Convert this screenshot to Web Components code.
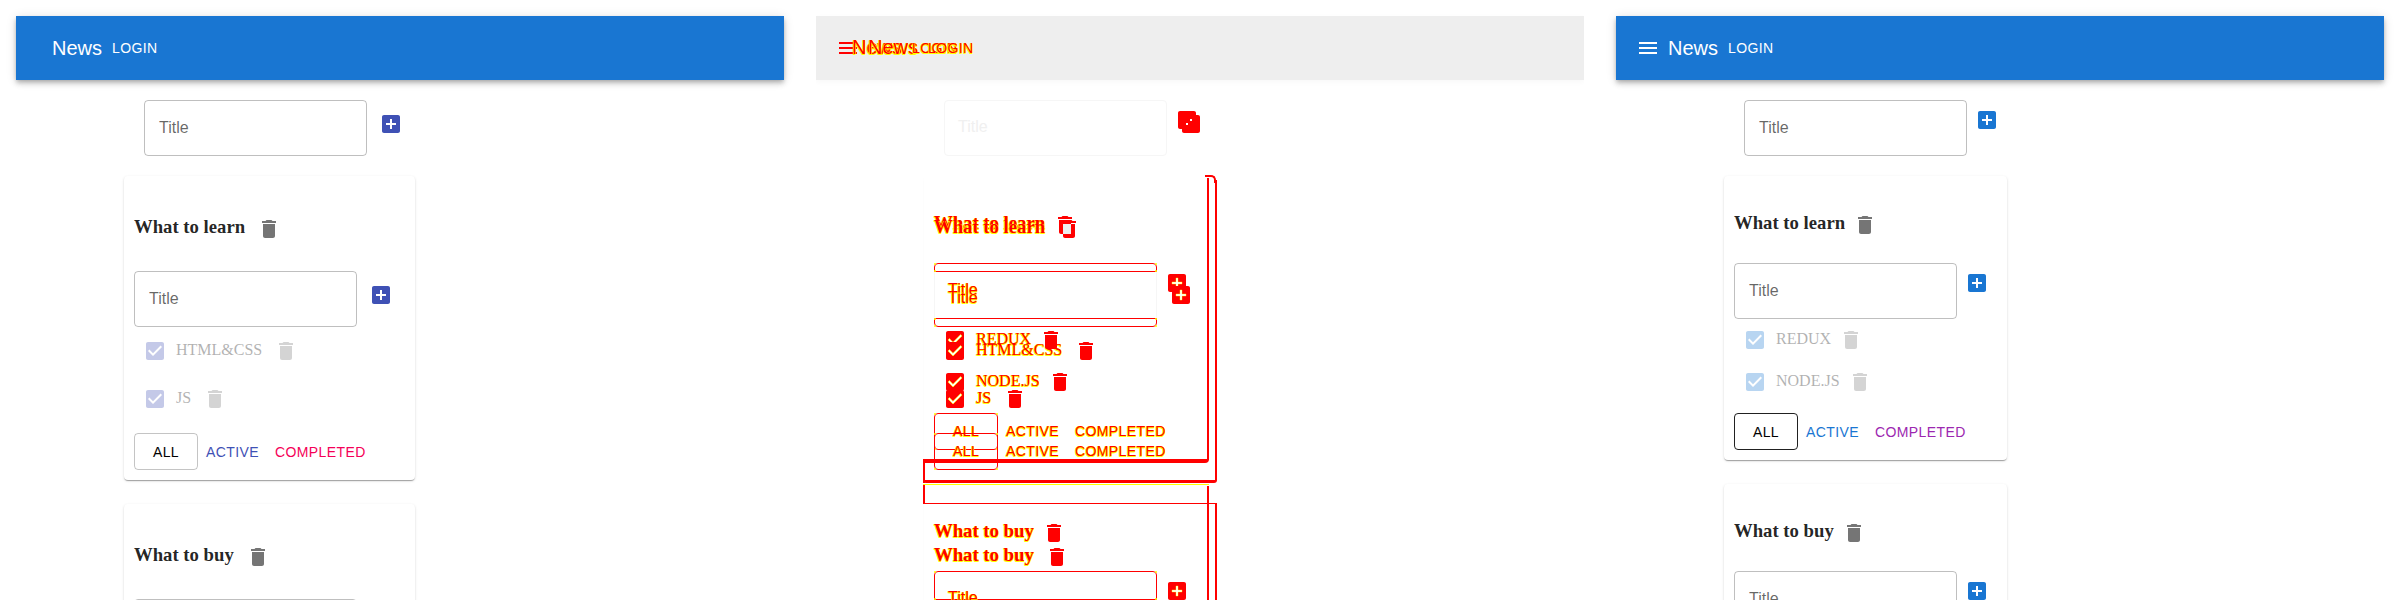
<!DOCTYPE html>
<html lang="en">
<head>
<meta charset="utf-8">
<title>Todo visual diff</title>
<style>
    html, body { margin: 0; background: #fff; }
    body {
        display: flex;
        gap: 32px;
        padding: 0 16px;
        width: 2368px;
        height: 600px;
        overflow: hidden;
        font-family: "Liberation Sans", Arial, sans-serif;
    }
</style>
</head>
<body>
<todo-panel variant="baseline">
    <app-bar></app-bar>
    <add-form></add-form>
    <todo-card heading="What to learn">
        <add-form></add-form>
        <task-list>
            <task-row>HTML&amp;CSS</task-row>
            <task-row>JS</task-row>
        </task-list>
        <filter-row></filter-row>
    </todo-card>
    <todo-card heading="What to buy">
        <add-form></add-form>
    </todo-card>
</todo-panel>

<diff-panel></diff-panel>

<todo-panel variant="actual">
    <app-bar menu></app-bar>
    <add-form></add-form>
    <todo-card heading="What to learn">
        <add-form></add-form>
        <task-list>
            <task-row>REDUX</task-row>
            <task-row>NODE.JS</task-row>
        </task-list>
        <filter-row></filter-row>
    </todo-card>
    <todo-card heading="What to buy">
        <add-form></add-form>
    </todo-card>
</todo-panel>

<script>
// material icons, all on a 24px grid
const ICONS = {
    add: "M19 3H5c-1.11 0-2 .9-2 2v14c0 1.1.89 2 2 2h14c1.1 0 2-.9 2-2V5c0-1.1-.9-2-2-2zm-2 10h-4v4h-2v-4H7v-2h4V7h2v4h4v2z",
    box: "M19 3H5c-1.11 0-2 .9-2 2v14c0 1.1.89 2 2 2h14c1.1 0 2-.9 2-2V5c0-1.1-.9-2-2-2z",
    plus: "M17 13h-4v4h-2v-4H7v-2h4V7h2v4h4v2z",
    check: "M10 17l-5-5 1.41-1.41L10 14.17l7.59-7.59L19 8l-9 9z",
    checked: "M19 3H5c-1.11 0-2 .9-2 2v14c0 1.1.89 2 2 2h14c1.1 0 2-.9 2-2V5c0-1.1-.9-2-2-2zm-9 14l-5-5 1.41-1.41L10 14.17l7.59-7.59L19 8l-9 9z",
    trash: "M6 19c0 1.1.9 2 2 2h8c1.1 0 2-.9 2-2V7H6v12zM19 4h-3.5l-1-1h-5l-1 1H5v2h14V4z",
    menu: "M3 18h18v-2H3v2zm0-5h18v-2H3v2zm0-7v2h18V6H3z"
};

const svgIcon = (name, color) =>
    `<svg width="24" height="24" viewBox="0 0 24 24" fill="${color}" style="display:block;flex:none"><path d="${ICONS[name]}"/></svg>`;

class TodoPanel extends HTMLElement {
    constructor() {
        super();
        this.attachShadow({mode: "open"}).innerHTML = `
            <style>
                :host {
                    display: block;
                    width: 768px;
                    flex: none;
                    padding-top: 16px;
                    color: #000;
                }
                :host([variant="baseline"]) {
                    --primary: #3f51b5;
                    --secondary: #f50057;
                    --all-border: rgba(0,0,0,.23);
                    --gap: 12px;
                    --add-top: 12px;
                    --card-width: 291px;
                    --head-top: 41px;
                    --head-bottom: 30px;
                    --list-top: 12px;
                    --row-gap: 24px;
                    --filter-top: 22px;
                }
                :host([variant="actual"]) {
                    --primary: #1976d2;
                    --secondary: #9c27b0;
                    --all-border: rgba(0,0,0,.87);
                    --gap: 8px;
                    --add-top: 8px;
                    --card-width: 283px;
                    --head-top: 37px;
                    --head-bottom: 26px;
                    --list-top: 9px;
                    --row-gap: 18px;
                    --filter-top: 19px;
                }
                ::slotted(add-form) { margin: 20px 0 20px 128px; }
                ::slotted(todo-card) { margin: 0 0 24px 108px; }
            </style>
            <slot></slot>
        `;
    }
}

class AppBar extends HTMLElement {
    constructor() {
        super();
        this.attachShadow({mode: "open"});
    }
    connectedCallback() {
        const hasMenu = this.hasAttribute("menu");
        this.shadowRoot.innerHTML = `
            <style>
                :host {
                    display: flex;
                    align-items: center;
                    height: 64px;
                    padding-left: ${hasMenu ? 20 : 36}px;
                    background: #1976d2;
                    color: #fff;
                    box-shadow: 0 2px 4px -1px rgba(0,0,0,.2), 0 4px 5px 0 rgba(0,0,0,.14), 0 1px 10px 0 rgba(0,0,0,.12);
                }
                .title { font-size: 20px; line-height: 32px; margin-left: ${hasMenu ? 8 : 0}px; }
                .login { font-size: 14px; letter-spacing: .4px; margin-left: 10px; }
            </style>
            ${hasMenu ? svgIcon("menu", "#fff") : ""}
            <span class="title">News</span>
            <span class="login">LOGIN</span>
        `;
    }
}

class AddForm extends HTMLElement {
    constructor() {
        super();
        this.attachShadow({mode: "open"}).innerHTML = `
            <style>
                :host { display: flex; align-items: flex-start; gap: var(--gap); }
                .field {
                    box-sizing: border-box;
                    display: flex;
                    align-items: center;
                    width: 223px;
                    height: 56px;
                    padding-left: 14px;
                    border: 1px solid rgba(0,0,0,.25);
                    border-radius: 4px;
                    font-size: 16px;
                    color: rgba(0,0,0,.6);
                }
                .add { margin-top: var(--add-top); }
            </style>
            <div class="field">Title</div>
            <div class="add">${svgIcon("add", "var(--primary)")}</div>
        `;
    }
}

class TodoCard extends HTMLElement {
    constructor() {
        super();
        this.attachShadow({mode: "open"});
    }
    connectedCallback() {
        this.shadowRoot.innerHTML = `
            <style>
                :host {
                    display: block;
                    box-sizing: border-box;
                    width: var(--card-width);
                    padding: var(--head-top) 10px 10px;
                    border-radius: 4px;
                    background: #fff;
                    box-shadow: 0 2px 1px -1px rgba(0,0,0,.2), 0 1px 1px 0 rgba(0,0,0,.14), 0 1px 3px 0 rgba(0,0,0,.12);
                }
                .head {
                    display: flex;
                    align-items: flex-start;
                    gap: var(--gap);
                    height: 24px;
                    margin-bottom: var(--head-bottom);
                }
                h3 {
                    margin: 0;
                    font: bold 18.72px/20px "Liberation Serif", "Times New Roman", serif;
                    color: rgba(0,0,0,.87);
                }
                ::slotted(add-form) { margin-bottom: var(--list-top); }
            </style>
            <div class="head">
                <h3>${this.getAttribute("heading")}</h3>
                ${svgIcon("trash", "rgba(0,0,0,.54)")}
            </div>
            <slot></slot>
        `;
    }
}

class TaskList extends HTMLElement {
    constructor() {
        super();
        this.attachShadow({mode: "open"}).innerHTML = `
            <style>
                :host {
                    display: flex;
                    flex-direction: column;
                    gap: var(--row-gap);
                    padding-left: 9px;
                }
            </style>
            <slot></slot>
        `;
    }
}

class TaskRow extends HTMLElement {
    constructor() {
        super();
        this.attachShadow({mode: "open"}).innerHTML = `
            <style>
                :host {
                    display: flex;
                    align-items: flex-start;
                    height: 24px;
                    opacity: .3;
                    gap: var(--gap);
                }
                .text {
                    margin-left: calc(9px - var(--gap));
                    font: 16px/22px "Liberation Serif", "Times New Roman", serif;
                    color: #000;
                }
            </style>
            ${svgIcon("checked", "var(--primary)")}
            <span class="text"><slot></slot></span>
            ${svgIcon("trash", "rgba(0,0,0,.54)")}
        `;
    }
}

class FilterRow extends HTMLElement {
    constructor() {
        super();
        this.attachShadow({mode: "open"}).innerHTML = `
            <style>
                :host {
                    display: flex;
                    margin-top: var(--filter-top);
                    font-size: 14px;
                    letter-spacing: .4px;
                }
                span {
                    box-sizing: border-box;
                    display: flex;
                    align-items: center;
                    height: 37px;
                    padding: 0 8px;
                }
                .all {
                    justify-content: center;
                    width: 64px;
                    padding: 0;
                    border: 1px solid var(--all-border);
                    border-radius: 4px;
                    color: #000;
                }
                .active { color: var(--primary); }
                .completed { color: var(--secondary); }
            </style>
            <span class="all">ALL</span>
            <span class="active">ACTIVE</span>
            <span class="completed">COMPLETED</span>
        `;
    }
}

// middle picture: changed pixels red, antialiased ones yellow, the rest washed out.
// every mark sits at the place it has in the two outer panels, so this one is a free canvas
class DiffPanel extends HTMLElement {
    constructor() {
        super();
        this.attachShadow({mode: "open"});
    }
    connectedCallback() {
        const marks = [];
        const box = (x, y, w, h, css) =>
            marks.push(`<div class="mark" style="left:${x}px;top:${y}px;width:${w}px;height:${h}px;${css}"></div>`);
        const text = (x, baseline, label, cls, ascent) =>
            marks.push(`<span class="mark txt ${cls}" style="left:${x}px;top:${baseline - ascent}px">${label}</span>`);
        const icon = (x, y, name) =>
            marks.push(`<div class="mark" style="left:${x}px;top:${y}px">${svgIcon(name, "#f00")}</div>`);
        const addIcon = (x, y) => {
            icon(x, y, "box");
            marks.push(`<svg class="mark" style="left:${x}px;top:${y}px" width="24" height="24" viewBox="0 0 24 24"><path d="${ICONS.plus}" fill="#fff" stroke="#ff0" stroke-width=".4"/></svg>`);
        };
        const checkIcon = (x, y) => {
            icon(x, y, "box");
            marks.push(`<svg class="mark" style="left:${x}px;top:${y}px" width="24" height="24" viewBox="0 0 24 24"><path d="${ICONS.check}" fill="#fff" stroke="#ff0" stroke-width=".6"/></svg>`);
        };
        // a rounded frame with the yellow pixels that the antialiased corners leave
        const frame = (x, y, w, h, radius) => {
            box(x, y, w, h, `box-sizing:border-box;border:1px solid #f00;border-radius:${radius};`);
            for (const [cx, cy] of [[x, y], [x + w - 2, y], [x, y + h - 2], [x + w - 2, y + h - 2]]) {
                box(cx, cy, 2, 2, "background:#ff0;border-radius:1px;");
            }
        };
        const red = "background:#f00;";

        // washed out parts
        box(128, 100, 223, 56, "border:1px solid #f6f6f6;border-radius:4px;box-sizing:border-box;");
        text(142, 133, "Title", "faint", 15);
        box(108, 176, 283, 284, "border-radius:4px;box-shadow:0 1px 3px rgba(0,0,0,.025);");
        box(108, 484, 283, 140, "border-radius:4px;box-shadow:0 1px 3px rgba(0,0,0,.025);");

        // bar
        icon(20, 36, "menu");
        for (const x of [36, 52]) text(x, 54, "News", "sans big", 18);
        for (const x of [96, 112]) text(x, 53, "LOGIN", "sans button", 13);

        // top form
        icon(359, 108, "box");
        icon(363, 112, "box");
        box(370, 123, 2, 2, "background:#fff;");
        box(374, 119, 2, 2, "background:#fff;");

        // card outlines
        box(389, 175, 11, 8, "border-top:2px solid #f00;border-right:2px solid #f00;border-radius:0 5px 0 0;box-sizing:border-box;");
        box(391, 178, 2, 282, red);
        box(399, 180, 2, 300, red);
        box(107, 459, 286, 4, red + "border-radius:0 0 4px 0;");
        box(107, 459, 2, 24, red);
        box(107, 480, 294, 3, red + "border-radius:0 0 4px 4px;");
        box(107, 484, 286, 1, "background:#ff0;");
        box(107, 485, 2, 19, red);
        box(108, 503, 293, 1, red);
        box(391, 486, 2, 114, red);
        box(399, 504, 2, 96, red);

        // card one heading
        for (const y of [229, 233]) text(118, y, "What to learn", "serif head", 17);
        icon(237, 213, "trash");
        icon(241, 217, "trash");
        box(247, 224, 8, 10, "background:#eee;");

        // card one field: the two frames share their sides
        frame(118, 263, 223, 9, "4px 4px 0 0");
        box(118, 272, 223, 46, "border:solid #f6f6f6;border-width:0 1px;box-sizing:border-box;");
        frame(118, 318, 223, 9, "0 0 4px 4px");
        text(132, 296, "Title", "sans", 15);
        text(132, 304, "Title", "sans", 15);
        addIcon(349, 271);
        addIcon(353, 283);

        // card one rows
        checkIcon(127, 328);
        checkIcon(127, 339);
        checkIcon(127, 370);
        checkIcon(127, 387);
        text(160, 344, "REDUX", "serif", 14);
        text(160, 355, "HTML&amp;CSS", "serif", 14);
        text(160, 386, "NODE.JS", "serif", 14);
        text(160, 403, "JS", "serif", 14);
        icon(223, 328, "trash");
        icon(258, 339, "trash");
        icon(232, 370, "trash");
        icon(187, 387, "trash");

        // filters of both panels, 20px apart
        for (const [y, b] of [[413, 436], [433, 456]]) {
            frame(118, y, 64, 37, "4px");
            for (const [x, label] of [[137, "ALL"], [190, "ACTIVE"], [259, "COMPLETED"]]) {
                text(x, b, label, "sans button", 13);
            }
        }

        // card two
        text(118, 537, "What to buy", "serif head", 17);
        text(118, 561, "What to buy", "serif head", 17);
        icon(226, 521, "trash");
        icon(229, 545, "trash");
        frame(118, 571, 223, 29, "4px 4px 0 0");
        text(132, 604, "Title", "sans", 15);
        addIcon(349, 579);

        this.shadowRoot.innerHTML = `
            <style>
                :host {
                    display: block;
                    position: relative;
                    flex: none;
                    width: 768px;
                    height: 600px;
                    overflow: hidden;
                }
                .bar {
                    position: absolute;
                    left: 0;
                    top: 16px;
                    width: 768px;
                    height: 64px;
                    background: #eee;
                    box-shadow: 0 2px 6px rgba(0,0,0,.03);
                }
                .mark { position: absolute; display: block; }
                .txt {
                    white-space: nowrap;
                    line-height: normal;
                    color: #f00;
                    text-shadow: .5px .5px 0 #ff0, -.5px -.5px 0 #ff0, .5px -.5px 0 #ff0, -.5px .5px 0 #ff0;
                }
                .sans { font-family: "Liberation Sans", Arial, sans-serif; font-size: 16px; }
                .big { font-size: 20px; }
                .button { font-size: 14px; letter-spacing: .4px; }
                .serif { font-family: "Liberation Serif", "Times New Roman", serif; font-size: 16px; }
                .head { font-size: 18.72px; font-weight: bold; }
                .txt.faint {
                    font-family: "Liberation Sans", Arial, sans-serif;
                    font-size: 16px;
                    color: #f0f0f0;
                    text-shadow: none;
                }
            </style>
            <div class="bar"></div>
            ${marks.join("\n")}
        `;
    }
}

customElements.define("todo-panel", TodoPanel);
customElements.define("app-bar", AppBar);
customElements.define("add-form", AddForm);
customElements.define("todo-card", TodoCard);
customElements.define("task-list", TaskList);
customElements.define("task-row", TaskRow);
customElements.define("filter-row", FilterRow);
customElements.define("diff-panel", DiffPanel);
</script>
</body>
</html>
